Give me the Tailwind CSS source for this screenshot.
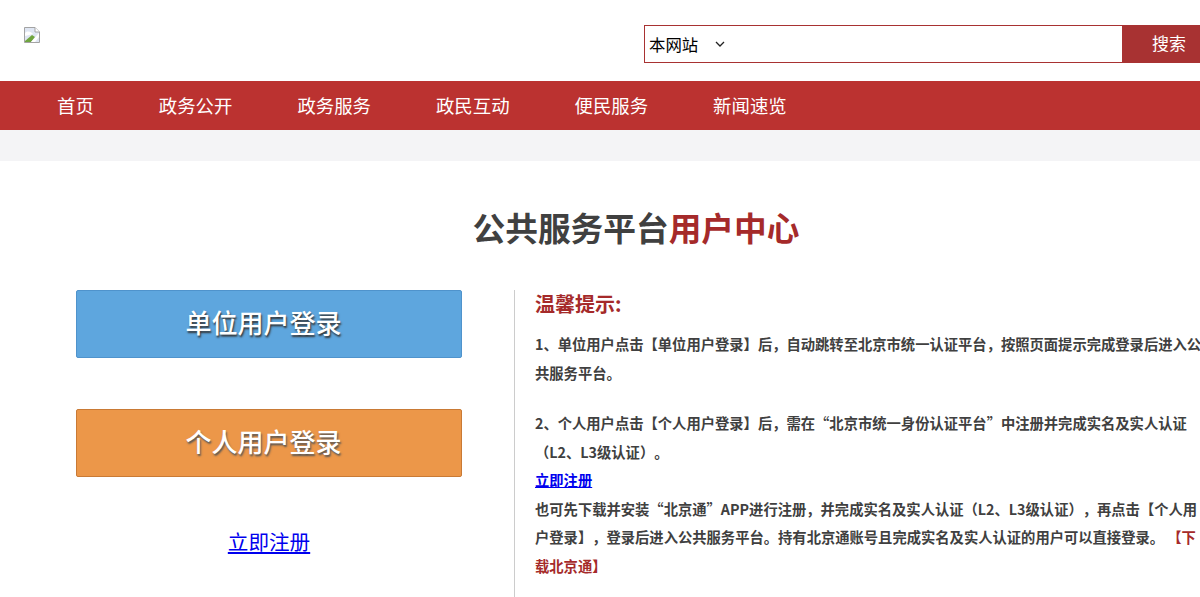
<!DOCTYPE html>
<html lang="zh-CN">

<head>
  <meta charset="UTF-8">
  <meta name="viewport" content="width=device-width, initial-scale=1.0">
  <title>公共服务平台用户中心</title>
  <script src="https://cdn.jsdelivr.net/npm/@tailwindcss/browser@4"></script>
</head>

<body class="w-full h-[597px] overflow-hidden bg-white font-['Noto_Sans_CJK_SC',sans-serif]">
  <div class="w-[1272px]">
    <!-- header -->
    <header class="h-[81px] flex items-start justify-between">
      <svg class="w-4 h-4 mt-[27px] ml-6" viewBox="0 0 16 16">
        <path d="M0.5 0.5H11L15.5 5V15.5H0.5Z" fill="#dfe6f3" stroke="#a3a3a3" />
        <path d="M11 0.5V5H15.5" fill="#fff" stroke="#a3a3a3" />
        <path d="M1 6C4 3 7 5 9 7L1 9Z" fill="#fff" />
        <path d="M1 15V14L8 8L11 10L7 15Z" fill="#6fa53f" />
        <path d="M15 6L7 15H11L15 10Z" fill="#fff" />
      </svg>
      <div class="flex w-[556px] h-[38px] mt-[25px] mr-[72px]">
        <div class="flex-1 flex items-center border border-[#a83232] pl-1 text-[16.4px] text-black">
          <span>本网站</span>
          <svg class="w-[10px] h-[6px] ml-[17px]" viewBox="0 0 10 6" fill="none" stroke="#222" stroke-width="1.3">
            <path d="M1 1L5 5L9 1" />
          </svg>
        </div>
        <button class="w-[77px] bg-[#a83232] text-white text-[17px] pl-[15px] pb-[2px]">搜索</button>
      </div>
    </header>

    <!-- nav -->
    <nav class="h-[49px] w-[1200px] bg-[#bb3230] flex items-center pl-[57px] gap-[65px] text-[18.4px] text-white">
      <a href="#">首页</a>
      <a href="#">政务公开</a>
      <a href="#">政务服务</a>
      <a href="#">政民互动</a>
      <a href="#">便民服务</a>
      <a href="#">新闻速览</a>
    </nav>
    <div class="h-[31px] w-[1200px] bg-[#f4f4f6]"></div>

    <h1 class="mt-[42px] mb-[39px] h-[48px] leading-[48px] text-center text-[32.7px] font-bold text-[#404040]">公共服务平台<span class="text-[#a52a2a]">用户中心</span></h1>

    <main class="flex">
      <!-- login buttons -->
      <div class="w-[439px] ml-[75px] shrink-0 flex flex-col">
        <a href="#" class="ml-px w-[386px] h-[68px] flex items-center justify-center rounded-[2px] border border-[#4f93cc] bg-[#5ea6de] pr-[11px] pb-[5px] text-[26px] font-medium text-white [text-shadow:1px_2px_2px_#333]">单位用户登录</a>
        <a href="#" class="ml-px mt-[51px] w-[386px] h-[68px] flex items-center justify-center rounded-[2px] border border-[#c97a35] bg-[#ec9749] pr-[11px] pb-[5px] text-[26px] font-medium text-white [text-shadow:1px_2px_2px_#555]">个人用户登录</a>
        <a href="#" class="ml-px mt-[49px] w-[386px] text-center text-[20.6px] text-[#0000ee] underline">立即注册</a>
      </div>

      <!-- tips -->
      <div class="w-[693px] h-[307px] shrink-0 border-l border-[#cccccc] pl-5">
        <h3 class="text-xl font-bold leading-[28px] text-[#a52a2a]">温馨提示:</h3>
        <div class="mt-[12px] whitespace-nowrap text-[14.3px] font-bold leading-[28.5px] text-[#404040] [text-spacing-trim:space-all]">
          <p>1、单位用户点击【单位用户登录】后，自动跳转至北京市统一认证平台，按照页面提示完成登录后进入公<br>共服务平台。</p>
          <p class="mt-[22px]">2、个人用户点击【个人用户登录】后，需在“北京市统一身份认证平台”中注册并完成实名及实人认证<br>（L2、L3级认证）。</p>
          <a href="#" class="block text-[#0000ee] underline">立即注册</a>
          <p>也可先下载并安装“北京通”APP进行注册，并完成实名及实人认证（L2、L3级认证），再点击【个人用<br>户登录】，登录后进入公共服务平台。持有北京通账号且完成实名及实人认证的用户可以直接登录。 <a href="#" class="text-[#a52a2a]">【下<br>载北京通】</a></p>
        </div>
      </div>
    </main>
  </div>
</body>

</html>
